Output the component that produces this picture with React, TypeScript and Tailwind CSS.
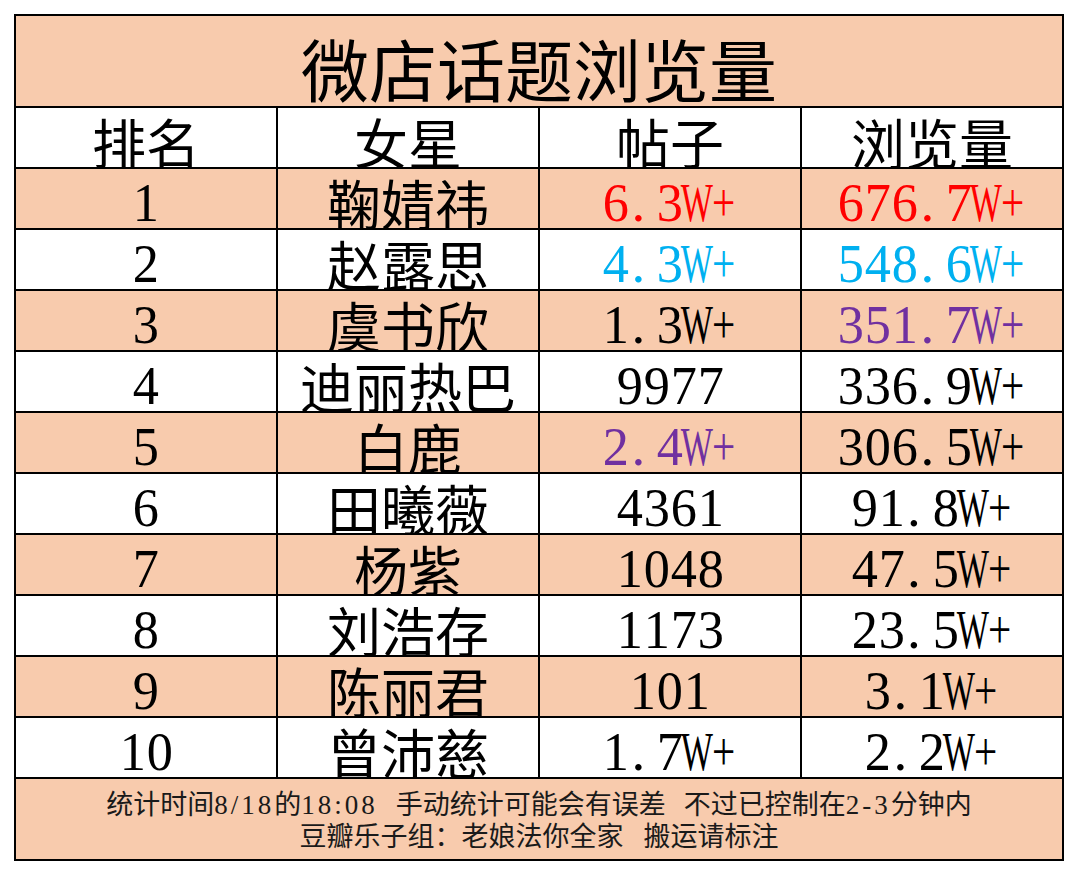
import React from 'react';

type Row = {
  rank: string;
  name: string;
  posts: string;
  views: string;
  postsColor?: string;
  viewsColor?: string;
};

const rows: Row[] = [
  { rank: '1', name: '鞠婧祎', posts: '6.3W+', views: '676.7W+', postsColor: 'text-[#ff0000]', viewsColor: 'text-[#ff0000]' },
  { rank: '2', name: '赵露思', posts: '4.3W+', views: '548.6W+', postsColor: 'text-[#00b0f0]', viewsColor: 'text-[#00b0f0]' },
  { rank: '3', name: '虞书欣', posts: '1.3W+', views: '351.7W+', viewsColor: 'text-[#7030a0]' },
  { rank: '4', name: '迪丽热巴', posts: '9977', views: '336.9W+' },
  { rank: '5', name: '白鹿', posts: '2.4W+', views: '306.5W+', postsColor: 'text-[#7030a0]' },
  { rank: '6', name: '田曦薇', posts: '4361', views: '91.8W+' },
  { rank: '7', name: '杨紫', posts: '1048', views: '47.5W+' },
  { rank: '8', name: '刘浩存', posts: '1173', views: '23.5W+' },
  { rank: '9', name: '陈丽君', posts: '101', views: '3.1W+' },
  { rank: '10', name: '曾沛慈', posts: '1.7W+', views: '2.2W+' },
];

const cjk = "font-['Noto_Sans_CJK_SC',sans-serif]";
const serif = "font-['Liberation_Serif','Noto_Sans_CJK_SC',serif]";

// half-width cells, like the spreadsheet's SimSun digits
const Glyph = ({ ch }: { ch: string }) => {
  if (ch === 'W') {
    return (
      <span className="inline-flex w-[27px] justify-center">
        <span className="inline-block scale-x-[0.62]">W</span>
      </span>
    );
  }
  if (ch === '+') {
    return (
      <span className="inline-flex w-[27px] justify-center">
        <span className="inline-block scale-x-[0.75]">+</span>
      </span>
    );
  }
  if (ch === '.') {
    return (
      <span className="inline-flex w-[27px] justify-start pl-[2px]">
        <span className="inline-block">.</span>
      </span>
    );
  }
  return (
    <span className="inline-flex w-[27px] justify-center">
      <span className="inline-block scale-x-[0.95]">{ch}</span>
    </span>
  );
};

const NumText = ({ value, color }: { value: string; color?: string }) => (
  <span className={`inline-flex ${serif} text-[55px] leading-none pt-[8px] ${color || 'text-black'}`}>
    {value.split('').map((ch, i) => (
      <Glyph key={i} ch={ch} />
    ))}
  </span>
);

const Digits = ({ children }: { children: React.ReactNode }) => (
  <span className="tracking-[3px]">{children}</span>
);

const App = () => {
  return (
    <div className="w-[1080px] h-[878px] bg-white pt-[14px] pl-[14px]">
      <div className="w-[1050px] grid grid-cols-4 gap-[2px] bg-black p-[2px]">
        {/* Title */}
        <div className={`col-span-4 h-[90px] bg-[#f8cbad] flex items-center justify-center ${cjk} text-[68px] leading-none text-black pt-[14px]`}>
          微店话题浏览量
        </div>

        {/* Header */}
        {['排名', '女星', '帖子', '浏览量'].map((h) => (
          <div key={h} className={`h-[59px] bg-white flex items-center justify-center ${cjk} text-[54px] leading-none text-black pt-[8px]`}>
            {h}
          </div>
        ))}

        {/* Data rows */}
        {rows.map((r, i) => {
          const bg = i % 2 === 0 ? 'bg-[#f8cbad]' : 'bg-white';
          return (
            <React.Fragment key={r.rank}>
              <div className={`h-[59px] ${bg} flex items-center justify-center`}>
                <NumText value={r.rank} />
              </div>
              <div className={`h-[59px] ${bg} flex items-center justify-center ${cjk} text-[54px] leading-none text-black pt-[8px]`}>
                {r.name}
              </div>
              <div className={`h-[59px] ${bg} flex items-center justify-center`}>
                <NumText value={r.posts} color={r.postsColor} />
              </div>
              <div className={`h-[59px] ${bg} flex items-center justify-center`}>
                <NumText value={r.views} color={r.viewsColor} />
              </div>
            </React.Fragment>
          );
        })}

        {/* Footer */}
        <div className={`col-span-4 h-[80px] bg-[#f8cbad] flex flex-col items-center justify-center ${serif} text-[27px] leading-[32px] text-[#1a1a1a] pt-[4px]`}>
          <p>
            统计时间<Digits>8/18</Digits>的<Digits>18:08</Digits>
            <span className="inline-block w-[18px]" />手动统计可能会有误差<span className="inline-block w-[18px]" />不过已控制在<Digits>2-3</Digits>分钟内
          </p>
          <p>
            豆瓣乐子组：老娘法你全家<span className="inline-block w-[20px]" />搬运请标注
          </p>
        </div>
      </div>
    </div>
  );
};

export default App;
